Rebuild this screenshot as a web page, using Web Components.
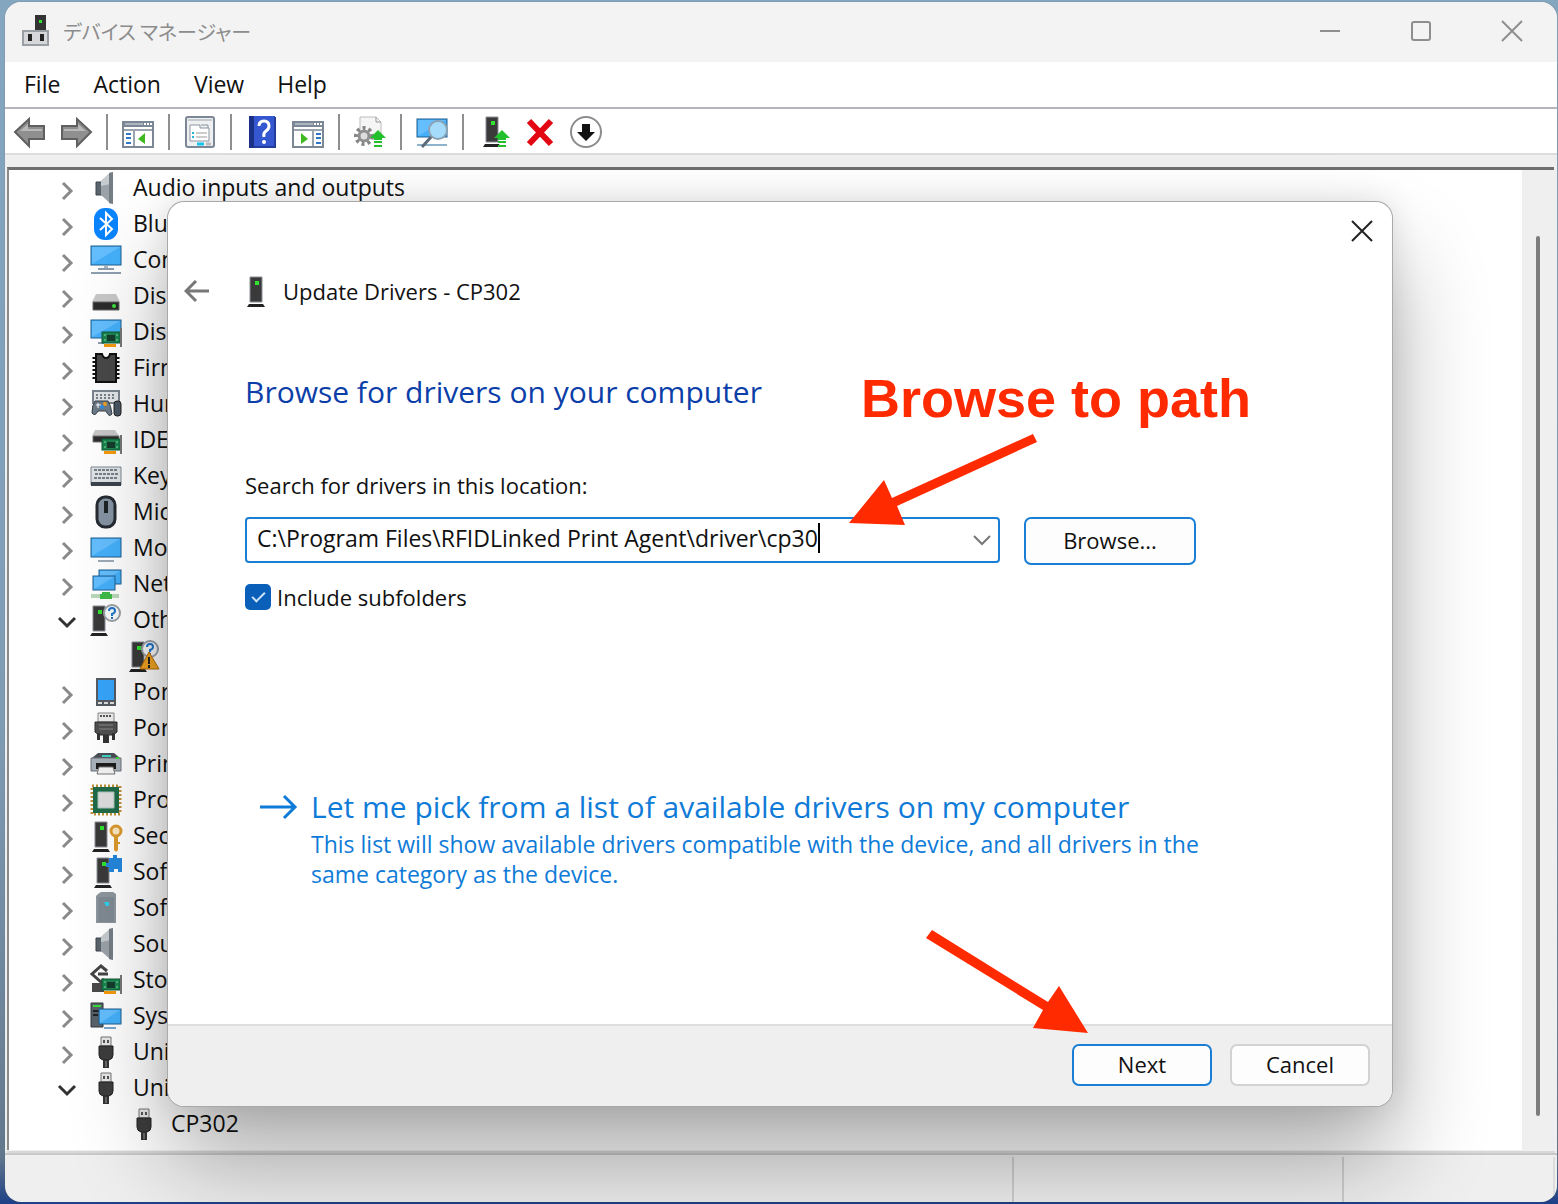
<!DOCTYPE html>
<html lang="en">
<head>
<meta charset="utf-8">
<title>Device Manager</title>
<style>
  html, body { height: 100%; }
  body {
    margin: 0;
    overflow: hidden;
    background: linear-gradient(#84a6bf, #7f9cb5 60%, #64788c 96%, #1c3f86);
    font-family: "Open Sans", "Noto Sans", "Noto Sans CJK JP", sans-serif;
    font-size: 22px;
    color: #111;
  }
</style>
</head>
<body>
<m-root></m-root>

<script>
class BaseElement extends HTMLElement {

  render(htmlstring) {
    const tpl = document.createElement('template');
    tpl.innerHTML = htmlstring;
    if (!this.shadowRoot) this.attachShadow({mode: 'open'});
    this.shadowRoot.replaceChildren(tpl.content.cloneNode(true));
    return this;
  }

  shadowQuery(qs) {
    return this.shadowRoot.querySelector(qs);
  }

  emit(event, detail) {
    this.dispatchEvent(new CustomEvent(event, { detail, bubbles: true, composed: true }));
    return this;
  }
}

// shared pieces of the device icons, all on a 32x32 grid
const tower = (x, y) => `
  <path d="M${x} ${y}h12v25h-12z" fill="#3a3a3a" stroke="#8b9097"/>
  <path d="M${x - 1} ${y + 27}h14l2 3h-18z" fill="#222"/>
  <rect x="${x + 5}" y="${y + 4}" width="4" height="4" fill="#2fe32f"/>`;

const card = (x, y) => `
  <rect x="${x}" y="${y}" width="18" height="11" fill="#1d8450" stroke="#0d5a34"/>
  <rect x="${x + 5}" y="${y + 3}" width="8" height="6" fill="#163c2c"/>
  <path d="M${x + 2} ${y + 3}h2M${x + 2} ${y + 8}h2M${x + 14} ${y + 3}h2M${x + 14} ${y + 8}h2" stroke="#7ee0a4"/>
  <path d="M${x + 19} ${y - 4}v19" stroke="#777" stroke-width="2"/>
  <rect x="${x + 2}" y="${y + 12}" width="12" height="3" fill="#f59a0c"/>`;

const screen = (x, y, w, h) => `
  <rect x="${x}" y="${y}" width="${w}" height="${h}" fill="#44b0fa" stroke="#1f5f8f"/>
  <path d="M${x + 1} ${y + h - 1}V${y + 1}H${x + w - 1}z" fill="#7fcbff" opacity=".55"/>`;

const greenUp = (x, y) => `
  <path d="M${x} ${y}l8 8h-4v2h-8v-2h-4z" fill="#22c02c"/>
  <path d="M${x - 4} ${y + 12}h8M${x - 4} ${y + 16}h8" stroke="#22c02c" stroke-width="2"/>`;

const speaker = `
  <path d="M6 10h6v13H6z" fill="#5a646d" stroke="#3c444c"/>
  <path d="M11 9L21 0v32L11 23z" fill="#9ba1a8"/>
  <path d="M11 9L21 0v12L11 14z" fill="#c6cbcf"/>
  <path d="M19 1l4-1v32l-4-1z" fill="#747c84"/>`;

const usb = `
  <path d="M11 1h10v9H11z" fill="#e6e6e6" stroke="#777"/>
  <path d="M13 4h2v3h-2zM17 4h2v3h-2z" fill="#555"/>
  <path d="M9 10h14v9q0 4-4 5h-6q-4-1-4-5z" fill="#3d3d3d" stroke="#222"/>
  <path d="M13 24h6v8h-6z" fill="#333"/><path d="M16 25v6" stroke="#999"/>`;

const question = `
  <circle cx="22" cy="9" r="8" fill="#f7f9fb" stroke="#9aa0a6" stroke-width="2"/>
  <path d="M19 7q0-3 3-3t3 3q0 2-3 3v2M22 13v2" fill="none" stroke="#1f73c9" stroke-width="2"/>`;

const ICONS = {
  app: `<path d="M16 0h11v16H16z" fill="#333"/><rect x="20" y="5" width="3" height="3" fill="#2fe32f"/>
    <path d="M4 16h25v14H4z" fill="#d5d7da" stroke="#9a9ea5" stroke-width="2"/>
    <path d="M9 19h4v7H9zM21 19h4v7h-4z" fill="#222"/>`,
  tower: tower(10, 1),
  speaker,
  bluetooth: `<rect x="4" y="0" width="24" height="32" rx="11" fill="#0a84ff"/>
    <path d="M10 10l12 11-6 6V5l6 6-12 11" fill="none" stroke="#fff" stroke-width="2"/>`,
  computer: screen(1, 2, 30, 19) + `<path d="M8 25h16M1 29h30" stroke="#8c9fb0" stroke-width="2"/><path d="M14 22h4v2h-4z" fill="#aab7c2"/>`,
  disk: `<path d="M6 14h20l4 8H2z" fill="#c8c8c8"/><path d="M3 22h26v8H3z" fill="#2c2c2c" stroke="#666"/><circle cx="24" cy="26" r="2" fill="#3be33b"/>`,
  display: screen(1, 4, 30, 18) + `<path d="M8 27h6" stroke="#8c9fb0" stroke-width="2"/>` + card(12, 16),
  firmware: `<path d="M6 2h6q1 4 4 4t4-4h6v28H6z" fill="#484848" stroke="#111" stroke-width="2"/>
    <path d="M4 5v24M28 5v24" stroke="#111" stroke-width="3" stroke-dasharray="2 2"/>`,
  hid: `<path d="M3 3h26v12H3z" fill="#e3e6e9" stroke="#7b858e" stroke-width="2"/>
    <path d="M6 7h20M6 10h20" stroke="#77818a" stroke-width="2" stroke-dasharray="2 2"/>
    <path d="M5 13h13q3 4 4 13-3 4-6-3H8q-3 6-6 2 0-8 3-12z" fill="#6d7b89" stroke="#36404a"/>
    <path d="M6 17h5M8 15v5" stroke="#fff"/><circle cx="15" cy="16" r="2" fill="#f0a020"/><circle cx="12" cy="19" r="2" fill="#2a8de8"/>
    <rect x="24" y="13" width="7" height="15" rx="3" fill="#4a5662" stroke="#222"/>`,
  ide: `<path d="M5 6h20l4 6H2z" fill="#c8c8c8"/><path d="M3 12h26v6H3z" fill="#2c2c2c" stroke="#777"/>` + card(12, 15),
  keyboard: `<path d="M1 7h30v18H1z" fill="#dfe3e6" stroke="#7f8891"/><path d="M1 22h30v4H1z" fill="#3b444c"/>
    <path d="M4 10h24M5 14h24M4 18h24" stroke="#77818a" stroke-width="2" stroke-dasharray="3 1"/>`,
  mouse: `<rect x="7" y="1" width="18" height="30" rx="8" fill="#8593a3" stroke="#252b31" stroke-width="3"/>
    <path d="M16 5v12" stroke="#1d2226" stroke-width="4"/>`,
  monitor: screen(1, 6, 30, 19) + `<path d="M8 29h16" stroke="#9eacb8" stroke-width="2"/>`,
  network: screen(9, 2, 22, 14) + screen(3, 8, 22, 14) + `<path d="M1 28h28" stroke="#b9d8b9" stroke-width="4"/><path d="M12 24h8v2h2v5H10v-5h2z" fill="#3fbb48"/>`,
  other: tower(3, 2) + question,
  unknown: tower(4, 2) + question + `<path d="M21 12l10 17H12z" fill="#f3a623" stroke="#b56c08"/><path d="M21 17v7M21 25v3" stroke="#222" stroke-width="2"/>`,
  portable: `<path d="M6 2h20v28H6z" fill="#555b61"/><path d="M8 4h16v20H8z" fill="#36a5fb"/><path d="M8 27h16" stroke="#ddd" stroke-width="2" stroke-dasharray="4 2"/>`,
  port: `<path d="M8 1h16v9H8z" fill="#eee" stroke="#888"/><path d="M10 4h12" stroke="#555" stroke-width="2" stroke-dasharray="2 1"/>
    <path d="M5 10h22v10l-4 3H9l-4-3z" fill="#505050" stroke="#2c2c2c"/><path d="M9 13h14M9 17h14" stroke="#888"/>
    <path d="M7 21h3v7H7zM22 21h3v7h-3zM13 23h6v8h-6z" fill="#333"/>`,
  printer: `<path d="M8 5h16l6 5H2z" fill="#4a4f55"/><path d="M1 10h30v13H1z" fill="#a9b2ba" stroke="#6c757e"/>
    <path d="M12 8h9" stroke="#3fd0c0" stroke-width="2"/><path d="M26 10h3" stroke="#2fe32f" stroke-width="2"/><path d="M6 15h20v6H6z" fill="#1d1d1d"/><path d="M9 19h14l2 7H7z" fill="#f4f4f4" stroke="#777"/>`,
  cpu: `<rect x="2" y="2" width="28" height="28" fill="none" stroke="#c0903a" stroke-width="3" stroke-dasharray="2 2"/>
    <path d="M3 3h26v26H3z" fill="#1f6b49"/><path d="M8 8h16v16H8z" fill="#dedede" stroke="#a8c4b4"/>`,
  security: tower(5, 2) + `<circle cx="26" cy="11" r="5" fill="#fbe7c0" stroke="#dc9a2c" stroke-width="3"/><path d="M24 15h4v15l-2 2-2-2zM28 22h2v2h-2z" fill="#dc9a2c"/>`,
  component: tower(7, 2) + `<path d="M19 2h4v-3h4v3h5v14h-4v-3h-4v3h-5v-5h-3V7h3z" fill="#2587dd"/>`,
  software: `<path d="M8 2l3-2h12l3 2v29H6V4z" fill="#8d969e"/><path d="M8 5h16v25H8z" fill="#7f8a93"/><path d="M14 10h5v4h-3z" fill="#2fd0ea"/>`,
  storage: `<path d="M17 7L11 2 2 10l9 8 3-3M8 10h10" fill="none" stroke="#444" stroke-width="3"/><path d="M2 19h12v9H2z" fill="#4a4a4a"/>` + card(12, 15),
  system: `<path d="M1 3h12v24H1z" fill="#59626a" stroke="#30363b"/><path d="M3 6h8" stroke="#38dd38" stroke-width="2"/><path d="M3 11h8M3 15h5" stroke="#222" stroke-width="2"/>`
    + screen(9, 9, 22, 15) + `<path d="M14 28h12" stroke="#7aa7cc" stroke-width="2"/>`,
  usb,

  // toolbar
  back: `<path d="M1 16L15 3v7h15v13H15v7z" fill="#8f8f8f" stroke="#606060" stroke-width="2"/><path d="M5 16l9-8v5h14v2H6z" fill="#b9b9b9"/>`,
  forward: `<path d="M31 16L17 3v7H2v13h15v7z" fill="#8f8f8f" stroke="#606060" stroke-width="2"/><path d="M27 16l-9-8v5H4v2h22z" fill="#b9b9b9"/>`,
  treepane: `<path d="M1 6h30v25H1z" fill="#fff" stroke="#7b8794" stroke-width="2"/><path d="M1 6h30v5H1z" fill="#7b8794"/>
    <path d="M3 8h18" stroke="#dfe4e8"/><path d="M22 8h8" stroke="#fff" stroke-width="2" stroke-dasharray="2 1"/><path d="M2 14h28M12 14v16" stroke="#9aa4ae" stroke-width="2"/>
    <path d="M4 18h5M4 22h5M4 27h5" stroke="#2f75c8" stroke-width="2"/><path d="M23 17v11l-7-5z" fill="#3eb91f"/>`,
  properties: `<rect x="2" y="1" width="28" height="30" rx="2" fill="#eef0f2" stroke="#7b8794" stroke-width="2"/>
    <path d="M4 4h24" stroke="#c3cad0" stroke-width="2"/><path d="M6 9h10v3h9v13H6z" fill="#fff" stroke="#8a95a0"/><path d="M17 9h7v3" fill="none" stroke="#8a95a0"/>
    <path d="M12 17h11M12 21h11" stroke="#999"/><path d="M8 17h2M8 21h2" stroke="#20b5d8" stroke-width="2"/><path d="M13 28h7" stroke="#14c4ee" stroke-width="3"/><path d="M22 28h5" stroke="#bbb" stroke-width="3"/>`,
  help: `<path d="M3 0h26v32H3z" fill="#3557cf"/><path d="M3 0h5v32H3z" fill="#1b3185"/><path d="M8 31h21V1" fill="none" stroke="#223d9b" stroke-width="2"/>
    <path d="M13 10q0-5 5-5t5 5q0 3-3 5t-2 6" fill="none" stroke="#fff" stroke-width="3"/><circle cx="18" cy="26" r="2" fill="#fff"/>`,
  actionpane: `<path d="M1 6h30v25H1z" fill="#fff" stroke="#7b8794" stroke-width="2"/><path d="M1 6h30v5H1z" fill="#7b8794"/>
    <path d="M3 8h18" stroke="#dfe4e8"/><path d="M22 8h8" stroke="#fff" stroke-width="2" stroke-dasharray="2 1"/><path d="M2 14h28M21 14v16" stroke="#9aa4ae" stroke-width="2"/>
    <path d="M24 18h5M24 22h5M24 27h5" stroke="#2f75c8" stroke-width="2"/><path d="M9 17v11l7-5z" fill="#3eb91f"/>`,
  scan: `<path d="M6 1h16l5 5v17H6z" fill="#f5f5f5" stroke="#bbb"/><path d="M22 1v5h5" fill="none" stroke="#999"/>
    <circle cx="10" cy="20" r="8" fill="none" stroke="#858585" stroke-width="4" stroke-dasharray="3 3"/><circle cx="10" cy="20" r="5" fill="#ddd" stroke="#8f8f8f" stroke-width="3"/>` + greenUp(24, 14),
  search: screen(1, 3, 30, 18) + `<path d="M1 29h30" stroke="#8fb2cd" stroke-width="2"/><path d="M16 20L6 31" stroke="#5d6b78" stroke-width="3"/>
    <circle cx="22" cy="14" r="9" fill="#a6dcfb" stroke="#8ba2b4" stroke-width="2"/>`,
  update: tower(8, 1) + greenUp(24, 14),
  remove: `<path d="M5 5l22 23M27 5L5 28" stroke="#e30613" stroke-width="6"/>`,
  disable: `<circle cx="16" cy="16" r="15" fill="#fff" stroke="#8c8c8c" stroke-width="2"/><path d="M12 8h8v8h5l-9 9-9-9h5z" fill="#111"/>`
};


window.customElements.define('m-icon', class extends BaseElement {

  connectedCallback() {
    this.render(`<style>
      :host { display: block; flex: none; width: 32px; height: 32px; }
      svg { display: block; width: 100%; height: 100%; overflow: visible; }
      </style>
      <svg viewBox="0 0 32 32" aria-hidden="true">${ICONS[this.getAttribute('name')] || ''}</svg>`);
  }
});


window.customElements.define('m-root', class extends BaseElement {

  connectedCallback() {
    this.render(`
      <style>
        :host { display: flex; height: 100%; box-sizing: border-box; padding: 2px 1px 2px 5px; position: relative; }
        main {
          flex: 1; min-width: 0; display: flex; flex-direction: column;
          background: #efefef; border-radius: 16px; overflow: hidden;
          box-shadow: 0 0 1px #4c5a66;
        }
        m-tree { flex: 1; min-height: 0; }
        m-wizard { position: absolute; top: 202px; left: 168px; right: 166px; bottom: 98px; }
        m-note { position: absolute; left: 861px; top: 366px; }
        m-arrow { position: absolute; }
        .path { left: 849px; top: 434px; }
        .next { left: 926px; top: 930px; }
      </style>
      <main>
        <m-titlebar>デバイス マネージャー</m-titlebar>
        <m-menubar></m-menubar>
        <m-toolbar></m-toolbar>
        <m-tree></m-tree>
        <m-statusbar></m-statusbar>
      </main>
      <m-wizard></m-wizard>
      <m-note>Browse to path</m-note>
      <m-arrow class="path" width="188" height="91" points="184,0 188,8 48,72 56,91 0,89 35,46 43,64"></m-arrow>
      <m-arrow class="next" width="162" height="103" points="6,0 122,72 133,56 162,103 107,98 117,80 0,8"></m-arrow>`);
  }
});


window.customElements.define('m-titlebar', class extends BaseElement {

  connectedCallback() {
    this.render(`<style>
      :host { display: flex; align-items: center; height: 58px; padding-bottom: 2px; background: #f3f3f3; color: #8c8c8c; }
      m-icon { margin: 0 12px 0 14px; }
      h1 { flex: 1; margin: 0; font: 20px "Noto Sans CJK JP", sans-serif; font-feature-settings: "palt"; }
      button { width: 91px; height: 58px; padding: 0; border: 0; background: none; }
      svg { display: block; margin: auto; fill: none; stroke: #8e8e8e; stroke-width: 2; }
      </style>
      <m-icon name="app"></m-icon>
      <h1><slot></slot></h1>
      <button aria-label="Minimize"><svg width="22" height="22"><path d="M1 11h20"/></svg></button>
      <button aria-label="Maximize"><svg width="22" height="22"><rect x="2" y="2" width="18" height="18" rx="2"/></svg></button>
      <button aria-label="Close"><svg width="22" height="22"><path d="M1 1l20 20M21 1L1 21"/></svg></button>`);
  }
});


window.customElements.define('m-menubar', class extends BaseElement {

  connectedCallback() {
    const items = ['File', 'Action', 'View', 'Help'];
    this.render(`<style>
      :host { display: block; background: #fff; border-bottom: 2px solid #b4b6b9; }
      nav { display: flex; height: 43px; gap: 33px; padding: 0 19px 2px; }
      button { padding: 0; border: 0; background: none; font: inherit; font-size: 23px; color: #111; }
      </style>
      <nav aria-label="Menu">${items.map(i => `<button>${i}</button>`).join('')}</nav>`);
  }
});


window.customElements.define('m-toolbar', class extends BaseElement {

  connectedCallback() {
    const groups = [
      ['back', 'forward'], ['treepane'], ['properties'], ['help', 'actionpane'],
      ['scan'], ['search'], ['update', 'remove', 'disable']
    ];
    const html = groups
      .map(g => g.map(n => `<button aria-label="${n}"><m-icon name="${n}"></m-icon></button>`).join(''))
      .join('<hr>');
    this.render(`<style>
      :host { display: flex; align-items: center; height: 43px; gap: 14px; padding: 1px 9px 0; background: #fff; border-bottom: 2px solid #dcdcdc; }
      button { padding: 0; border: 0; background: none; }
      hr { width: 2px; height: 36px; margin: 0; border: 0; background: #8f8f8f; }
      </style>${html}`);
  }
});


window.customElements.define('m-tree-item', class extends BaseElement {

  connectedCallback() {
    const state = this.getAttribute('state');
    const chevron = {
      closed: '<path d="M8 5l8 8-8 8" stroke="#8a8a8a"/>',
      open: '<path d="M4 8l8 8 8-8" stroke="#333"/>'
    }[state];
    this.render(`<style>
      :host { display: flex; align-items: center; height: 36px; gap: 11px; white-space: nowrap; font-size: 23px; }
      button, i { flex: none; width: 24px; height: 24px; padding: 0; border: 0; background: none; }
      i { width: 62px; }
      span { padding-bottom: 2px; }
      svg { display: block; margin-top: 2px; fill: none; stroke-width: 3; }
      </style>
      ${chevron ? `<button aria-label="${state}"><svg width="24" height="24">${chevron}</svg></button>` : '<i></i>'}
      <m-icon name="${this.getAttribute('icon')}"></m-icon>
      <span><slot></slot></span>`);
    this.setAttribute('role', 'treeitem');
  }
});


window.customElements.define('m-tree', class extends BaseElement {

  connectedCallback() {
    const rows = [
      ['speaker', 'Audio inputs and outputs'],
      ['bluetooth', 'Bluetooth'],
      ['computer', 'Computer'],
      ['disk', 'Disk'],
      ['display', 'Display'],
      ['firmware', 'Firmware'],
      ['hid', 'Human'],
      ['ide', 'IDE'],
      ['keyboard', 'Keyboards'],
      ['mouse', 'Mice'],
      ['monitor', 'Monitors'],
      ['network', 'Network'],
      ['other', 'Other', 'open'],
      ['unknown', '', 'leaf'],
      ['portable', 'Portable'],
      ['port', 'Ports'],
      ['printer', 'Print'],
      ['cpu', 'Processors'],
      ['security', 'Security'],
      ['component', 'Software'],
      ['software', 'Software'],
      ['speaker', 'Sound'],
      ['storage', 'Storage'],
      ['system', 'System'],
      ['usb', 'Universal'],
      ['usb', 'Universal', 'open'],
      ['usb', 'CP302', 'leaf']
    ];
    this.render(`<style>
      :host {
        display: flex; margin: 12px 3px 0 2px; background: #fff;
        border-top: 3px solid #6e6e6e; border-left: 2px solid #8b8b8b; overflow: hidden;
      }
      .rows { flex: 1; min-width: 0; padding-left: 46px; overflow: hidden; }
      .scroll { width: 32px; background: #efefef; display: flex; justify-content: center; padding: 66px 0 34px; box-sizing: border-box; }
      .scroll span { width: 4px; border-radius: 2px; background: #7d7d7d; }
      </style>
      <div class="rows" role="tree">
        ${rows.map(([icon, label, state]) =>
          `<m-tree-item icon="${icon}" state="${state || 'closed'}">${label}</m-tree-item>`).join('')}
      </div>
      <div class="scroll"><span></span></div>`);
  }
});


window.customElements.define('m-statusbar', class extends BaseElement {

  connectedCallback() {
    this.render(`<style>
      :host { display: flex; height: 45px; margin-top: 3px; padding-top: 2px; border-top: 2px solid #c9c9c9; box-shadow: 0 -4px 0 -2px #d8d8d8; }
      span { border-right: 2px solid #cfcfcf; box-sizing: border-box; }
      .main { flex: 1; }
      .mid { width: 330px; }
      .end { width: 211px; margin-right: 2px; border-color: #dcdcdc; }
      </style>
      <span class="main"></span><span class="mid"></span><span class="end"></span>`);
  }
});


window.customElements.define('m-button', class extends BaseElement {

  connectedCallback() {
    this.render(`<style>
      :host { display: block; flex: none; width: 140px; height: 42px; }
      button {
        width: 100%; height: 100%; padding: 0 0 2px; font: inherit; color: #111;
        background: #fdfdfd; border: 2px solid #d2d2d2; border-radius: 7px;
      }
      :host([primary]) button { border-color: #1a7fd4; }
      </style>
      <button><slot></slot></button>`);
  }
});


window.customElements.define('m-wizard', class extends BaseElement {

  connectedCallback() {
    this.render(`<style>
      :host {
        display: flex; flex-direction: column; background: #fff; border-radius: 16px; overflow: hidden;
        box-shadow: 0 0 0 1px #a9a9a9, 0 0 32px rgba(0, 0, 0, .12), 0 56px 96px rgba(0, 0, 0, .32);
      }
      button { padding: 0; border: 0; background: none; }
      svg { display: block; margin: auto; fill: none; stroke-width: 2; }
      .close { align-self: flex-end; width: 60px; height: 58px; flex: none; }
      header { display: flex; align-items: center; height: 64px; flex: none; padding-left: 13px; }
      header button { width: 32px; height: 32px; }
      header m-icon { margin: 0 11px 0 27px; }
      header span { padding-bottom: 2px; }
      section { flex: 1; padding: 48px 196px 0 77px; }
      h2 { margin: 0 0 57px; font-size: 30px; line-height: 40px; font-weight: 400; color: #0b3ea8; }
      label { display: block; line-height: 32px; }
      .row { display: flex; align-items: flex-start; gap: 24px; margin: 16px 0; }
      .combo {
        flex: 1; min-width: 0; display: flex; align-items: center; height: 46px; box-sizing: border-box;
        padding: 0 6px 0 10px; border: 2px solid #1a7fd4; border-radius: 4px; background: #fff;
      }
      .combo input {
        field-sizing: content; min-width: 0; padding: 0 0 4px; border: 0; outline: 0;
        font: inherit; font-size: 23px; color: #111; background: none;
      }
      .combo i { width: 2px; height: 30px; margin-bottom: 4px; background: #000; }
      .combo button { margin-left: auto; }
      .row m-button { width: 172px; height: 48px; }
      .check { display: flex; align-items: center; gap: 6px; }
      .check input {
        appearance: none; width: 26px; height: 26px; margin: 0; border-radius: 5px;
        background: #0a5fb8; display: grid; place-items: center;
      }
      .check input:checked::after {
        content: ""; width: 11px; height: 5px; margin-bottom: 4px;
        border: solid #cfe4f7; border-width: 0 0 2px 2px; transform: rotate(-45deg);
      }
      a { display: grid; grid-template-columns: 38px 1fr; column-gap: 13px; margin: 174px -20px 0 15px; color: #0f7bd8; text-decoration: none; }
      a strong { font-weight: 400; font-size: 30px; line-height: 40px; white-space: nowrap; }
      a span { grid-column: 2; font-size: 23px; line-height: 30px; padding-top: 2px; }
      a svg { margin: auto 0; }
      footer {
        display: flex; align-items: center; justify-content: flex-end; gap: 18px; flex: none;
        height: 82px; box-sizing: border-box; padding: 0 22px 2px; background: #efefef; border-top: 2px solid #dedede;
      }
      </style>
      <button class="close" aria-label="Close"><svg width="22" height="22" stroke="#222"><path d="M1 1l20 20M21 1L1 21"/></svg></button>
      <header>
        <button aria-label="Back"><svg width="26" height="24" stroke="#777"><path d="M25 11H3M12 1L2 11l10 10" stroke-width="3"/></svg></button>
        <m-icon name="tower"></m-icon>
        <span>Update Drivers - CP302</span>
      </header>
      <section>
        <h2>Browse for drivers on your computer</h2>
        <label for="location">Search for drivers in this location:</label>
        <div class="row">
          <div class="combo">
            <input id="location" type="text" size="51" value="C:\\Program Files\\RFIDLinked Print Agent\\driver\\cp30"><i></i>
            <button aria-label="Show locations"><svg width="20" height="12" stroke="#777"><path d="M2 2l8 8 8-8"/></svg></button>
          </div>
          <m-button primary>Browse...</m-button>
        </div>
        <label class="check"><input type="checkbox" checked>Include subfolders</label>
        <a href="#pick">
          <svg width="38" height="28"><path d="M0 14h35M24 3l11 11-11 11" stroke="#0f7bd8" stroke-width="3"/></svg>
          <strong>Let me pick from a list of available drivers on my computer</strong>
          <span>This list will show available drivers compatible with the device, and all drivers in the same category as the device.</span>
        </a>
      </section>
      <footer>
        <m-button primary>Next</m-button>
        <m-button>Cancel</m-button>
      </footer>`);
    this.shadowQuery('.close').addEventListener('click', () => this.emit('wizard-close'));
  }
});


window.customElements.define('m-note', class extends BaseElement {

  connectedCallback() {
    this.render(`<style>
      :host { display: block; font: bold 54px/64px "Liberation Sans", sans-serif; color: #ff2a00; white-space: nowrap; }
      </style>
      <slot></slot>`);
  }
});

window.customElements.define('m-arrow', class extends BaseElement {

  connectedCallback() {
    this.render(`<style>
      :host { display: block; pointer-events: none; }
      svg { display: block; fill: #ff2a00; }
      </style>
      <svg width="${this.getAttribute('width')}" height="${this.getAttribute('height')}"><polygon points="${this.getAttribute('points')}"/></svg>`);
  }
});
</script>
</body>
</html>
